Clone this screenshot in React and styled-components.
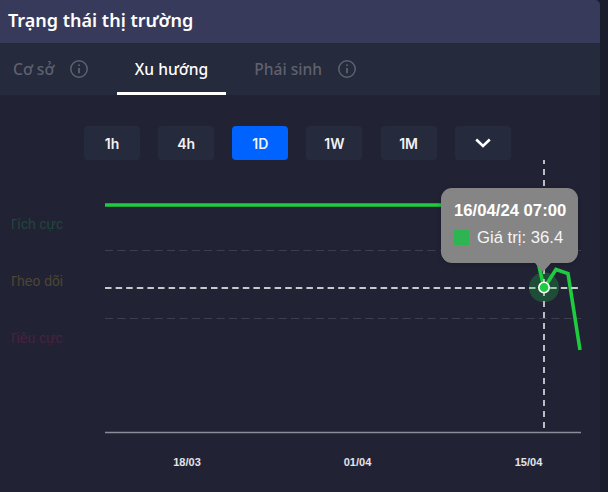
import React from "react";
import styled, { createGlobalStyle } from "styled-components";

const Global = createGlobalStyle`
  html, body { margin: 0; padding: 0; background: #1a1d2c; }
  #root { width: 608px; height: 492px; overflow: hidden; }
`;
const Panel = styled.div`
  width: 600px; height: 492px; background: #212335; overflow: hidden;
  border-top-right-radius: 5px;
  font-family: "Noto Sans", sans-serif;
`;
const Header = styled.div`
  height: 43px; box-sizing: border-box; padding: 0 8px 3px; display: flex; align-items: center;
  background: #373a5a; color: #fff; font-size: 18px; font-weight: 600; line-height: 1;
`;
const TabBar = styled.div`
  height: 52px; display: flex; gap: 11px; padding-left: 13px; background: #252a3c;
`;
const Tab = styled.div`
  display: flex; align-items: center; gap: 16px; padding: 0 ${p => (p.$first ? "18px 0 0" : "17.5px")};
  font-size: 15.6px; font-weight: 500; height: 52px; box-sizing: border-box;
  color: ${p => (p.$active ? "#fff" : "#5f616f")};
  border-bottom: 3px solid ${p => (p.$active ? "#fff" : "transparent")};
  padding-top: 3px;
`;
const Ranges = styled.div`
  display: flex; gap: 18.15px; padding: 31px 0 0 84px; height: 34px;
`;
const RangeButton = styled.div`
  width: 56px; height: 34px; border-radius: 4px; display: flex; align-items: center; justify-content: center;
  background: ${p => (p.$active ? "#0062ff" : "#252a3c")}; color: #f1f1f4;
  font-family: Inter, sans-serif; font-size: 14px; font-weight: 600;
`;
const Chart = styled.div`
  position: relative; height: 332px;
  svg { display: block; }
`;
const Tooltip = styled.div`
  position: absolute; left: 441px; top: 28px; width: 137px; height: 75px; box-sizing: border-box;
  padding: 12.5px 0 0 13px; border-radius: 11px; background: #858585; color: #fff;
  box-shadow: 0 1px 4px rgba(0,0,0,.25);
  font-family: "Liberation Sans", sans-serif; font-size: 16.7px; line-height: 20px;
  &::after {
    content: ""; position: absolute; left: 94px; top: 75px; border: 8px solid transparent;
    border-top: 9px solid #858585; border-bottom: 0;
  }
`;
const TooltipTitle = styled.div`font-weight: 700; white-space: nowrap;`;
const TooltipRow = styled.div`
  display: flex; align-items: center; gap: 8px; margin-top: 7px; color: #f5f5f5; white-space: nowrap;
`;
const Swatch = styled.span`width: 15px; height: 15px; background: #2eb552;`;

const Info = () => (
  <svg width="18" height="18" viewBox="0 0 18 18" fill="none" stroke="#5f616f" strokeWidth="1.5">
    <circle cx="9" cy="9" r="8.2" />
    <path d="M9 8v5.2" strokeWidth="1.8" />
    <circle cx="9" cy="5.2" r="1" fill="#5f616f" stroke="none" />
  </svg>
);
const Chevron = () => (
  <svg width="16" height="10" viewBox="0 0 16 10" fill="none" stroke="#fff" strokeWidth="2.6">
    <path d="M1.2 1.5 8 8l6.8-6.5" />
  </svg>
);
const axisText = { fontFamily: '"Liberation Sans", sans-serif', fontSize: 11, fontWeight: 700, fill: "#e4e4e8", textAnchor: "middle" };
const sideText = { fontFamily: '"Liberation Sans", sans-serif', fontSize: 14 };

export default function App() {
  return (
    <Panel>
      <Global />
      <Header>Trạng thái thị trường</Header>
      <TabBar>
        <Tab $first>Cơ sở <Info /></Tab>
        <Tab $active>Xu hướng</Tab>
        <Tab>Phái sinh <Info /></Tab>
      </TabBar>
      <Ranges>
        <RangeButton>1h</RangeButton>
        <RangeButton>4h</RangeButton>
        <RangeButton $active>1D</RangeButton>
        <RangeButton>1W</RangeButton>
        <RangeButton>1M</RangeButton>
        <RangeButton><Chevron /></RangeButton>
      </Ranges>
      <Chart>
        <svg width="600" height="332" viewBox="0 160 600 332">
          <defs>
            <clipPath id="side"><rect x="12" y="200" width="100" height="160" /></clipPath>
          </defs>
          <g clipPath="url(#side)" style={sideText}>
            <text x="8.5" y="229" fill="#1f483c">Tích cực</text>
            <text x="8.5" y="286" fill="#4e4630">Theo dõi</text>
            <text x="8.5" y="343" fill="#4a2140">Tiêu cực</text>
          </g>
          <path d="M105 250.5H581M105 318.5H581" stroke="#3d3f50" strokeWidth="1" strokeDasharray="8 4.4" />
          <path d="M105 432.5H581" stroke="#8a8c9a" strokeWidth="1.5" />
          <path d="M105 205H525L544 288L556 269.5L568 273.5L580 350" fill="none" stroke="#1fcb3f" strokeWidth="3.6" />
          <path d="M105 288H581" stroke="#fff" strokeWidth="1.4" strokeDasharray="6.5 4.1" />
          <path d="M544 158V430" stroke="#fff" strokeWidth="1.4" strokeDasharray="6 5" />
          <circle cx="544" cy="287.5" r="15" fill="#1fcb3f" opacity=".25" />
          <circle cx="544" cy="287.5" r="5.2" fill="#1fcb3f" stroke="#fff" strokeWidth="1.6" />
          <text x="187" y="466" style={axisText}>18/03</text>
          <text x="357.5" y="466" style={axisText}>01/04</text>
          <text x="528.5" y="466" style={axisText}>15/04</text>
        </svg>
        <Tooltip>
          <TooltipTitle>16/04/24 07:00</TooltipTitle>
          <TooltipRow><Swatch />Giá trị: 36.4</TooltipRow>
        </Tooltip>
      </Chart>
    </Panel>
  );
}
